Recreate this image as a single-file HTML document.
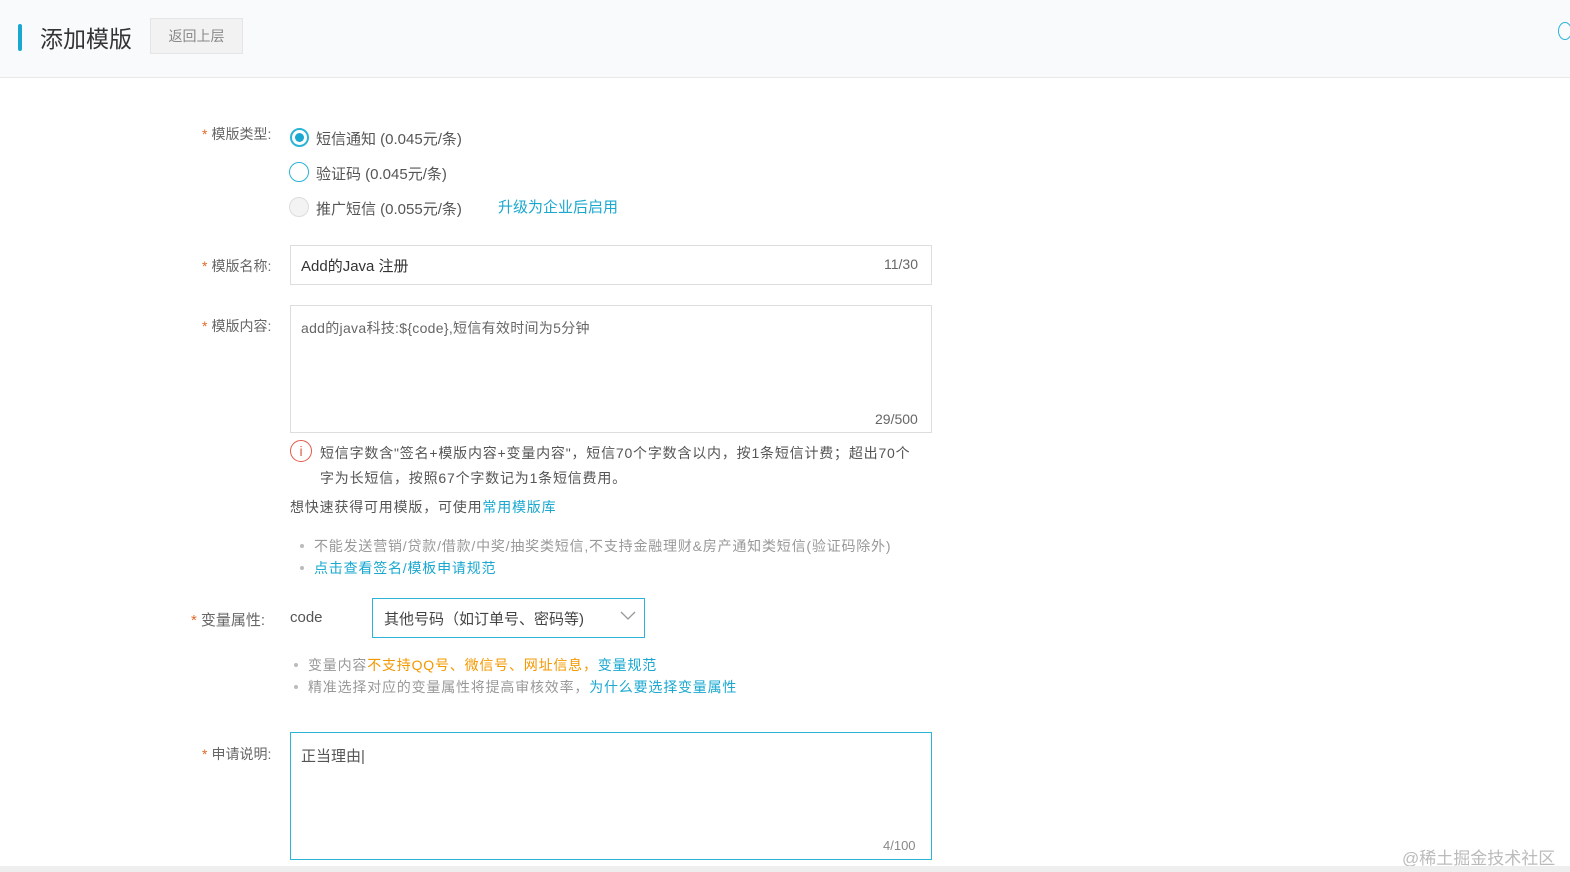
<!DOCTYPE html>
<html><head><meta charset="utf-8"><style>
body{margin:0;width:1570px;height:872px;overflow:hidden;background:#fff;font-family:"Liberation Sans","Noto Sans CJK SC",sans-serif;color:#333;position:relative}
.abs{position:absolute;white-space:nowrap}
.hdr{position:absolute;left:0;top:0;width:1570px;height:77px;background:#f9fafc;border-bottom:1px solid #e8e8e8}
.lbl{font-size:14px;color:#666}
.lbl b{color:#e06a2b;font-weight:normal;margin-right:4px}
.radio{position:absolute;width:16px;height:16px;border-radius:50%;border:1px solid #2bb4d6;background:#fff}
.blue{color:#1aa8d0}
.box{position:absolute;border:1px solid #ddd;background:#fff}
.g{color:#999}
.dot{display:inline-block;width:4px;height:4px;border-radius:50%;background:#bbb;margin:0 10px 3px 0}
.ls{letter-spacing:0.8px}
</style></head><body>
<div class="hdr"></div>
<div class="abs" style="left:18px;top:24px;width:4px;height:27px;background:#1aa8d0;border-radius:2px"></div>
<div class="abs" style="left:40px;top:20px;font-size:23px;color:#333">添加模版</div>
<div class="abs" style="left:150px;top:18px;width:91px;height:34px;background:#f2f2f2;border:1px solid #e5e5e5;font-size:14px;color:#888;line-height:34px;text-align:center">返回上层</div>

<div class="abs lbl" style="left:202px;top:124px"><b>*</b>模版类型:</div>
<div class="radio" style="left:290px;top:128px;border-width:2px;width:15px;height:15px"><div style="position:absolute;left:3px;top:3px;width:9px;height:9px;border-radius:50%;background:#1aa8d0"></div></div>
<div class="abs" style="left:316px;top:128px;font-size:15px;color:#555">短信通知 (0.045元/条)</div>
<div class="radio" style="left:289px;top:162px;width:18px;height:18px"></div>
<div class="abs" style="left:316px;top:163px;font-size:15px;color:#555">验证码 (0.045元/条)</div>
<div class="radio" style="left:289px;top:197px;width:18px;height:18px;border-color:#ddd;background:#f3f3f3"></div>
<div class="abs" style="left:316px;top:198px;font-size:15px;color:#555">推广短信 (0.055元/条)</div>
<div class="abs blue" style="left:498px;top:196px;font-size:15px">升级为企业后启用</div>

<div class="abs lbl" style="left:202px;top:256px"><b>*</b>模版名称:</div>
<div class="box" style="left:290px;top:245px;width:640px;height:38px"></div>
<div class="abs" style="left:301px;top:255px;font-size:15px">Add的Java 注册</div>
<div class="abs" style="left:884px;top:256px;font-size:14px;color:#666">11/30</div>

<div class="abs lbl" style="left:202px;top:316px"><b>*</b>模版内容:</div>
<div class="box" style="left:290px;top:305px;width:640px;height:126px"></div>
<div class="abs" style="left:301px;top:318px;font-size:14px;color:#666;letter-spacing:0.3px">add的java科技:${code},短信有效时间为5分钟</div>
<div class="abs" style="left:875px;top:411px;font-size:14px;color:#666">29/500</div>

<div class="abs" style="left:290px;top:440px;width:20px;height:20px;border:1.5px solid #e05a4a;border-radius:50%;color:#e05a4a;font-size:14px;text-align:center;line-height:20px">i</div>
<div class="abs ls" style="left:320px;top:441px;font-size:14px;color:#555;line-height:25px">短信字数含"签名+模版内容+变量内容"，短信70个字数含以内，按1条短信计费；超出70个<br>字为长短信，按照67个字数记为1条短信费用。</div>
<div class="abs ls" style="left:290px;top:497px;font-size:14px;color:#555">想快速获得可用模版，可使用<span class="blue">常用模版库</span></div>
<div class="abs g ls" style="left:300px;top:536px;font-size:14px"><span class="dot"></span>不能发送营销/贷款/借款/中奖/抽奖类短信,不支持金融理财&amp;房产通知类短信(验证码除外)</div>
<div class="abs blue ls" style="left:300px;top:558px;font-size:14px"><span class="dot"></span>点击查看签名/模板申请规范</div>

<div class="abs lbl" style="left:191px;top:609px;font-size:15px"><b>*</b>变量属性:</div>
<div class="abs" style="left:290px;top:609px;font-size:15px;color:#555">code</div>
<div class="box" style="left:372px;top:598px;width:271px;height:38px;border-color:#2bb4d6"></div>
<div class="abs" style="left:384px;top:608px;font-size:15px;color:#444">其他号码（如订单号、密码等)</div>
<svg class="abs" style="left:620px;top:610px" width="16" height="12"><path d="M1 2 L8 9 L15 2" stroke="#999" fill="none" stroke-width="1.3"/></svg>
<div class="abs g ls" style="left:294px;top:655px;font-size:14px"><span class="dot"></span>变量内容<span style="color:#f39800">不支持QQ号、微信号、网址信息，</span><span class="blue">变量规范</span></div>
<div class="abs g ls" style="left:294px;top:677px;font-size:14px"><span class="dot"></span>精准选择对应的变量属性将提高审核效率，<span class="blue">为什么要选择变量属性</span></div>

<div class="abs lbl" style="left:202px;top:744px"><b>*</b>申请说明:</div>
<div class="box" style="left:290px;top:732px;width:640px;height:126px;border-color:#2bb4d6"></div>
<div class="abs" style="left:301px;top:745px;font-size:15px;color:#555">正当理由|</div>
<div class="abs" style="left:883px;top:838px;font-size:13px;color:#888">4/100</div>

<div class="abs" style="left:1402px;top:844px;font-size:17px;color:#bbb">@稀土掘金技术社区</div>
<div class="abs" style="left:1558px;top:22px;width:12px;height:16px;border:1px solid #2bb4d6;border-radius:50%"></div>
<div class="abs" style="left:0;top:866px;width:1570px;height:6px;background:#eee"></div>
</body></html>
